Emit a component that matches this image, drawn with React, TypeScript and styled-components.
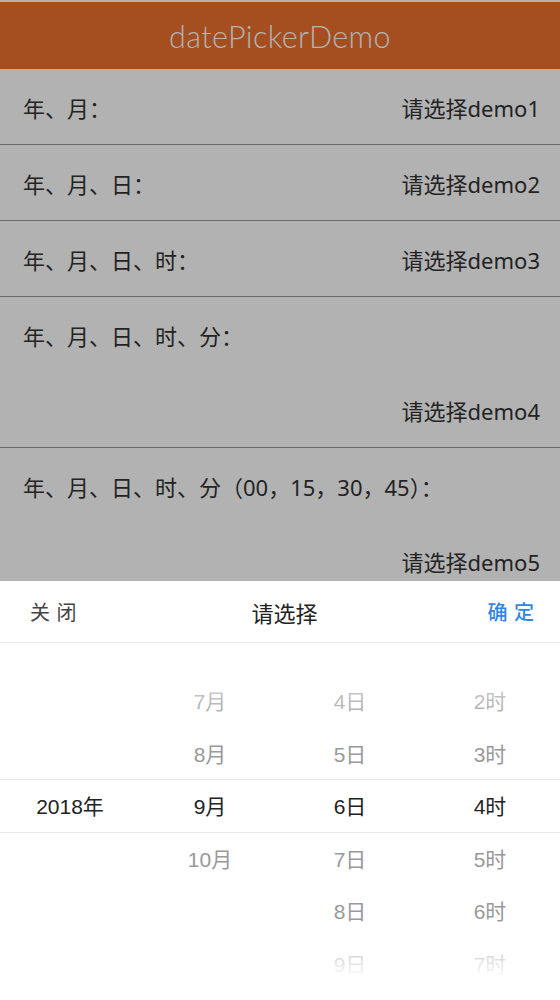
import React, { useState } from 'react';
import styled, { createGlobalStyle } from 'styled-components';

const ITEM_H = 52.5;
const SELECT_TOP = 136;

const GlobalStyle = createGlobalStyle`
  html, body {
    margin: 0;
    padding: 0;
    background: #fff;
    font-family: "Noto Sans", "Noto Sans CJK SC", sans-serif;
  }
`;

const demos = [
  { id: 1, label: '年、月：', tall: false },
  { id: 2, label: '年、月、日：', tall: false },
  { id: 3, label: '年、月、日、时：', tall: false },
  { id: 4, label: '年、月、日、时、分：', tall: true },
  { id: 5, label: '年、月、日、时、分（00，15，30，45）：', tall: true },
];

const columns = [
  { key: 'year', items: ['2018年'], selected: 0 },
  { key: 'month', items: ['7月', '8月', '9月', '10月'], selected: 2 },
  { key: 'day', items: ['4日', '5日', '6日', '7日', '8日', '9日'], selected: 2 },
  { key: 'hour', items: ['2时', '3时', '4时', '5时', '6时', '7时'], selected: 2 },
];

function App() {
  const [open, setOpen] = useState(true);

  return (
    <Page>
      <GlobalStyle />
      <Header>datePickerDemo</Header>

      {demos.map((item) => {
        return item.tall ? (
          <TallRow key={item.id} onClick={() => setOpen(true)}>
            <LineTop>
              <Label>{item.label}</Label>
            </LineTop>
            <LineBottom>
              <Value>请选择demo{item.id}</Value>
            </LineBottom>
          </TallRow>
        ) : (
          <Row key={item.id} onClick={() => setOpen(true)}>
            <Label>{item.label}</Label>
            <Value>请选择demo{item.id}</Value>
          </Row>
        );
      })}

      {open && (
        <>
          <Mask onClick={() => setOpen(false)} />
          <Picker>
            <PickerBar>
              <BarButton onClick={() => setOpen(false)}>关 闭</BarButton>
              <BarTitle>请选择</BarTitle>
              <BarButton $primary onClick={() => setOpen(false)}>
                确 定
              </BarButton>
            </PickerBar>
            <Wheel>
              <SelectBand />
              {columns.map((col) => (
                <Column key={col.key}>
                  <ColumnTrack
                    style={{ transform: `translateY(${SELECT_TOP - col.selected * ITEM_H}px)` }}
                  >
                    {col.items.map((text, i) => (
                      <WheelItem key={text} $active={i === col.selected}>
                        {text}
                      </WheelItem>
                    ))}
                  </ColumnTrack>
                </Column>
              ))}
              <FadeTop />
              <FadeBottom />
            </Wheel>
          </Picker>
        </>
      )}
    </Page>
  );
}
export default App;

const Page = styled.div`
  position: relative;
  min-height: 1000px;
  overflow: hidden;
`;

const Header = styled.header`
  height: 67px;
  margin-top: 2px;
  background: #ec712e;
  color: #fff;
  display: flex;
  align-items: center;
  justify-content: center;
  font-family: Lato, sans-serif;
  font-weight: 300;
  font-size: 30.5px;
  letter-spacing: 0.4px;
  padding-top: 1px;
  box-sizing: border-box;
`;

const Row = styled.div`
  height: 75px;
  display: flex;
  justify-content: space-between;
  align-items: center;
  padding: 0 20px 0 23px;
  border-bottom: 1px solid #999;
  cursor: pointer;
`;

const TallRow = styled.div`
  height: 150px;
  display: flex;
  flex-direction: column;
  padding: 0 20px 0 23px;
  border-bottom: 1px solid #999;
  cursor: pointer;
`;

const LineTop = styled.div`
  height: 75px;
  display: flex;
  align-items: center;
`;

const LineBottom = styled.div`
  height: 75px;
  display: flex;
  align-items: center;
  justify-content: flex-end;
`;

const Label = styled.span`
  font-size: 22px;
  color: #333;
`;

const Value = styled.span`
  font-size: 22px;
  color: #333;
`;

const Mask = styled.div`
  position: fixed;
  inset: 0;
  background: rgba(0, 0, 0, 0.3);
`;

const Picker = styled.div`
  position: fixed;
  left: 0;
  right: 0;
  bottom: 0;
  height: 419px;
  background: #fff;
  display: flex;
  flex-direction: column;
`;

const PickerBar = styled.div`
  height: 61px;
  flex-shrink: 0;
  display: flex;
  justify-content: space-between;
  align-items: center;
  padding: 0 25px 0 30px;
  border-bottom: 1px solid #e8e8e8;
`;

const BarButton = styled.span<{ $primary?: boolean }>`
  width: 80px;
  font-family: "Noto Sans CJK SC", sans-serif;
  font-size: 20px;
  letter-spacing: 1px;
  color: ${(p) => (p.$primary ? '#2f86e4' : '#444')};
  font-weight: ${(p) => (p.$primary ? 500 : 400)};
  text-align: ${(p) => (p.$primary ? 'right' : 'left')};
  cursor: pointer;
`;

const BarTitle = styled.span`
  font-family: "Noto Sans CJK SC", sans-serif;
  font-size: 22px;
  color: #222;
  margin-left: 4px;
`;

const Wheel = styled.div`
  position: relative;
  flex: 1;
  display: grid;
  grid-template-columns: repeat(4, 1fr);
  overflow: hidden;
`;

const SelectBand = styled.div`
  position: absolute;
  left: 0;
  right: 0;
  top: ${SELECT_TOP}px;
  height: ${ITEM_H - 1}px;
  border-top: 1px solid #e6e6e6;
  border-bottom: 1px solid #e6e6e6;
`;

const Column = styled.div`
  position: relative;
`;

const ColumnTrack = styled.div`
  display: flex;
  flex-direction: column;
`;

const WheelItem = styled.div<{ $active: boolean }>`
  height: ${ITEM_H}px;
  display: flex;
  align-items: center;
  justify-content: center;
  font-family: "Liberation Sans", "Noto Sans CJK SC", sans-serif;
  font-size: 21px;
  color: ${(p) => (p.$active ? '#222' : '#999')};
`;

const FadeTop = styled.div`
  position: absolute;
  left: 0;
  right: 0;
  top: 0;
  height: 95px;
  background: linear-gradient(to bottom, #fff 0%, rgba(255, 255, 255, 0.95) 10%, rgba(255, 255, 255, 0.35) 60%, rgba(255, 255, 255, 0) 100%);
  pointer-events: none;
`;

const FadeBottom = styled.div`
  position: absolute;
  left: 0;
  right: 0;
  bottom: 0;
  height: 70px;
  background: linear-gradient(to top, #fff 0%, #fff 30%, rgba(255, 255, 255, 0.6) 65%, rgba(255, 255, 255, 0) 100%);
  pointer-events: none;
`;
